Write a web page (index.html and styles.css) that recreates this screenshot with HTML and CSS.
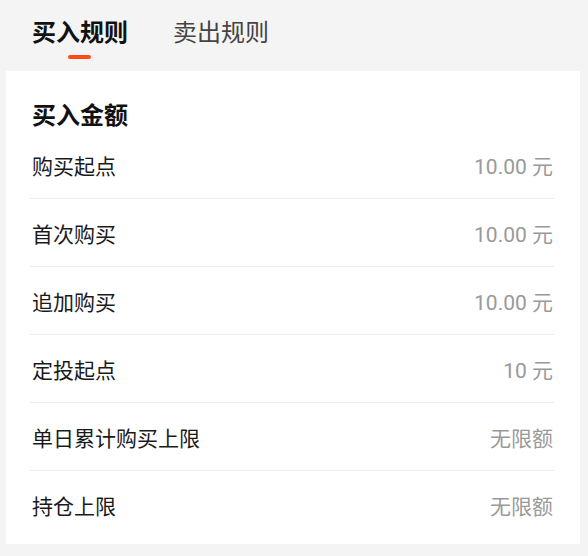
FILE: index.html
```
<!DOCTYPE html>
<html lang="zh-CN">
<head>
    <meta charset="UTF-8">
    <title>交易规则</title>
    <meta name="viewport" content="width=device-width, initial-scale=1.0">
    <link rel="stylesheet" href="styles.css">
</head>
<body>
    <div class="tabs">
        <div class="tab active">买入规则</div>
        <div class="tab">卖出规则</div>
    </div>

    <div class="card">
        <h2>买入金额</h2>
        <div class="row">
            <span class="label">购买起点</span>
            <span class="value">10.00 元</span>
        </div>
        <div class="row">
            <span class="label">首次购买</span>
            <span class="value">10.00 元</span>
        </div>
        <div class="row">
            <span class="label">追加购买</span>
            <span class="value">10.00 元</span>
        </div>
        <div class="row">
            <span class="label">定投起点</span>
            <span class="value">10 元</span>
        </div>
        <div class="row">
            <span class="label">单日累计购买上限</span>
            <span class="value">无限额</span>
        </div>
        <div class="row">
            <span class="label">持仓上限</span>
            <span class="value">无限额</span>
        </div>
    </div>
</body>
</html>
```

FILE: styles.css
```
body {
    margin: 0;
    background-color: #f4f4f4;
    font-family: "Noto Sans CJK SC", "Noto Sans", sans-serif;
    color: #1a1a1a;
}
.tabs {
    display: flex;
    gap: 45px;
    height: 71px;
    padding-left: 32px;
}
.tab {
    position: relative;
    font-size: 24px;
    line-height: 32px;
    padding-top: 15px;
    color: #444;
}
.tab.active {
    font-weight: bold;
    color: #111;
}
.tab.active::after {
    content: "";
    position: absolute;
    left: 36px;
    top: 55px;
    width: 23px;
    height: 4px;
    border-radius: 2px;
    background-color: #ff4b1a;
}
.card {
    background: white;
    margin: 0 8px 0 6px;
    padding: 25px 26px 6px 24px;
}
h2 {
    margin: 0;
    padding-left: 2px;
    font-size: 24px;
    line-height: 35px;
    font-weight: bold;
    color: #111;
}
.row {
    display: flex;
    justify-content: space-between;
    align-items: center;
    height: 67px;
    padding: 0 1px 0 2px;
    border-bottom: 1px solid #ececec;
    font-size: 21px;
}
.row:last-child {
    border-bottom: none;
}
.value {
    color: #999;
    font-family: Roboto, "Noto Sans CJK SC", sans-serif;
    font-size: 21px;
}
```
